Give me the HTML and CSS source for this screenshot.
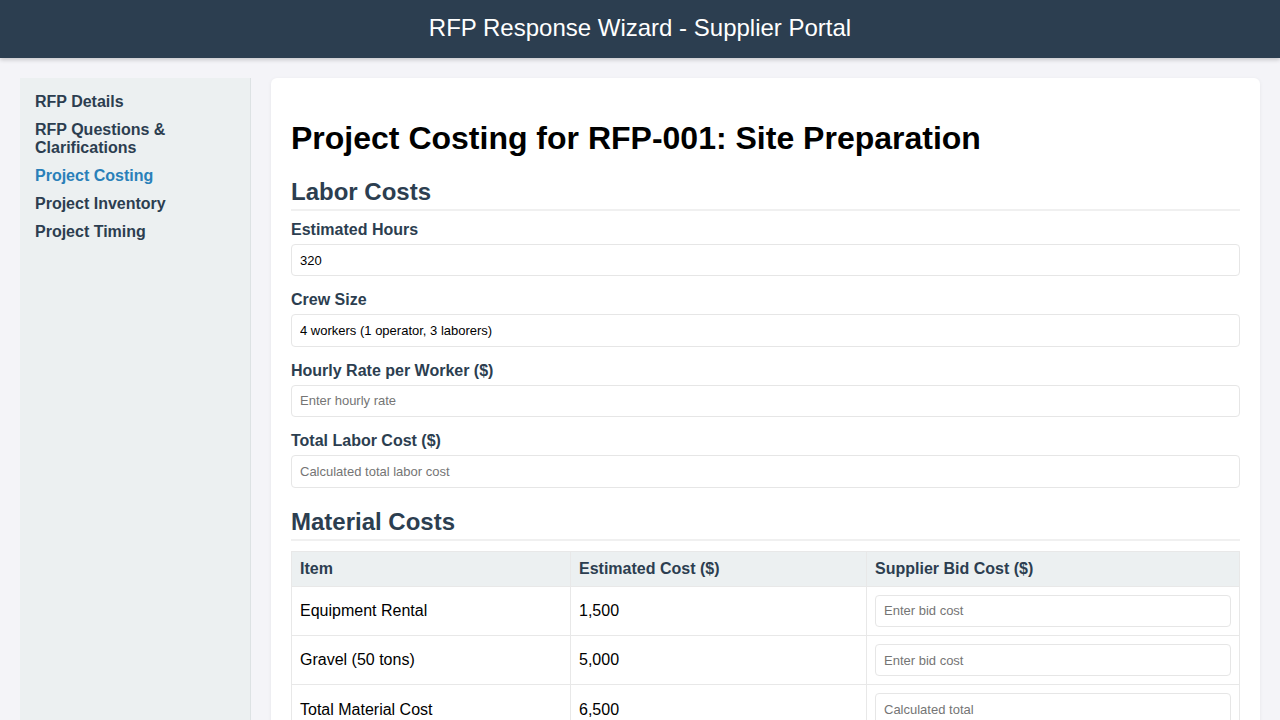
FILE: index.html
```html
<!DOCTYPE html>
<html lang="en">
<head>
<meta charset="utf-8">
<title>RFP Response Wizard - Supplier Portal</title>
<link rel="stylesheet" href="styles.css">
</head>
<body>
<header class="topbar">RFP Response Wizard - Supplier Portal</header>
<div class="layout">
  <nav class="sidebar">
    <ul class="nav-list">
      <li><a class="nav-link" href="#">RFP Details</a></li>
      <li><a class="nav-link" href="#">RFP Questions &amp; Clarifications</a></li>
      <li><a class="nav-link active" href="#">Project Costing</a></li>
      <li><a class="nav-link" href="#">Project Inventory</a></li>
      <li><a class="nav-link" href="#">Project Timing</a></li>
    </ul>
  </nav>
  <main class="card">
    <h1 class="page-title">Project Costing for RFP-001: Site Preparation</h1>
    <h2 class="section-title">Labor Costs</h2>
    <div class="form-group">
      <label class="field-label">Estimated Hours</label>
      <input class="field-input" type="text" value="320">
    </div>
    <div class="form-group">
      <label class="field-label">Crew Size</label>
      <input class="field-input" type="text" value="4 workers (1 operator, 3 laborers)">
    </div>
    <div class="form-group">
      <label class="field-label">Hourly Rate per Worker ($)</label>
      <input class="field-input" type="text" placeholder="Enter hourly rate">
    </div>
    <div class="form-group">
      <label class="field-label">Total Labor Cost ($)</label>
      <input class="field-input" type="text" placeholder="Calculated total labor cost">
    </div>
    <h2 class="section-title">Material Costs</h2>
    <table class="cost-table">
      <colgroup>
        <col class="col-item">
        <col class="col-est">
        <col class="col-bid">
      </colgroup>
      <thead>
        <tr><th>Item</th><th>Estimated Cost ($)</th><th>Supplier Bid Cost ($)</th></tr>
      </thead>
      <tbody>
        <tr><td>Equipment Rental</td><td>1,500</td><td><input class="field-input" type="text" placeholder="Enter bid cost"></td></tr>
        <tr><td>Gravel (50 tons)</td><td>5,000</td><td><input class="field-input" type="text" placeholder="Enter bid cost"></td></tr>
        <tr><td>Total Material Cost</td><td>6,500</td><td><input class="field-input" type="text" placeholder="Calculated total"></td></tr>
      </tbody>
    </table>
  </main>
</div>
</body>
</html>
```
FILE: styles.css
```css
* { box-sizing: border-box; }
body {
  margin: 0;
  font-family: "Liberation Sans", Arial, sans-serif;
  background: #f4f4f8;
  color: #000;
}
.topbar {
  background: #2c3e50;
  color: #fff;
  text-align: center;
  font-size: 24px;
  line-height: 28px;
  padding: 14px 0 16px;
  box-shadow: 0 2px 4px rgba(0,0,0,0.18);
}
.layout {
  display: flex;
  gap: 20px;
  padding: 20px;
  align-items: stretch;
}
.sidebar {
  flex: 0 0 231px;
  background: #ecf0f1;
  border-right: 1px solid #dde2e4;
  padding: 15px;
}
.nav-list {
  list-style: none;
  margin: 0;
  padding: 0;
}
.nav-list li { margin-bottom: 10px; }
.nav-link {
  display: block;
  text-decoration: none;
  color: #2c3e50;
  font-weight: bold;
  font-size: 16px;
  line-height: normal;
}
.nav-link.active { color: #2980b9; }
.card {
  flex: 1;
  background: #fff;
  border-radius: 6px;
  box-shadow: 0 1px 4px rgba(0,0,0,0.06);
  padding: 20px 20px 40px;
}
.page-title {
  font-size: 32px;
  line-height: normal;
  margin: 22px 0 21px;
  color: #000;
}
.section-title {
  font-size: 24px;
  line-height: normal;
  color: #2c3e50;
  margin: 20px 0 10px;
  padding-bottom: 3px;
  border-bottom: 2px solid #f0f0f0;
}
.page-title + .section-title { margin-top: 0; }
.form-group { margin-bottom: 15px; }
.field-label {
  display: block;
  font-weight: bold;
  font-size: 16px;
  line-height: normal;
  color: #2c3e50;
  margin-bottom: 5px;
}
.field-input {
  display: block;
  width: 100%;
  height: 32.4px;
  font-family: "Liberation Sans", Arial, sans-serif;
  font-size: 13px;
  padding: 0 8px;
  border: 1px solid #e6e6e6;
  border-radius: 4px;
  color: #000;
  background: #fff;
}
.field-input::placeholder { color: #757575; }
.cost-table {
  width: 100%;
  border-collapse: collapse;
  table-layout: fixed;
  font-size: 16px;
}
.col-item { width: 279px; }
.col-est { width: 296px; }
.cost-table th, .cost-table td {
  border: 1px solid #e8e8e8;
  padding: 8px;
  text-align: left;
  line-height: 18px;
}
.cost-table th {
  background: #ecf0f1;
  color: #2c3e50;
  font-weight: bold;
}
```
